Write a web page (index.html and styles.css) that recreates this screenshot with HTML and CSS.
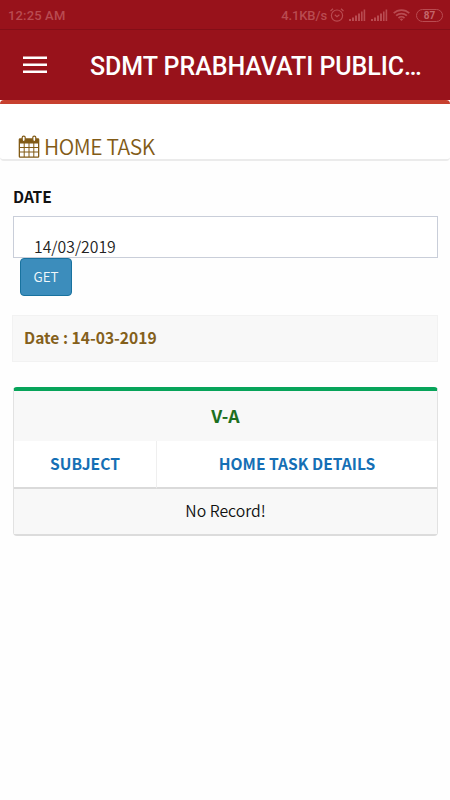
FILE: index.html
```html
<!DOCTYPE html>
<html lang="en">
<head>
    <meta charset="UTF-8">
    <meta name="viewport" content="width=device-width, initial-scale=1.0">
    <title>Home Task</title>
    <link rel="stylesheet" href="styles.css">
</head>
<body>

    <!-- Phone status bar -->
    <div class="status-bar">
        <span class="clock">12:25 AM</span>
        <span class="speed">4.1KB/s</span>
        <svg class="alarm" width="14" height="14" viewBox="0 0 14 14" fill="none" stroke="currentColor" stroke-width="1.2">
            <circle cx="7" cy="7.6" r="5.6"/>
            <path d="M4.8 6.8L7 8.8l2.4-2M.5 3L3 .8M13.5 3L11 .8"/>
        </svg>
        <svg class="signal" width="17" height="12" viewBox="0 0 17 12" fill="currentColor">
            <path d="M0 10h2v2H0zM3 8.5h2V12H3zM6 6.5h2V12H6zM9 4.5h2V12H9zM12 2.5h1.6V12H12zM14.6 0.5h1.6V12h-1.6z"/>
        </svg>
        <svg class="signal" width="17" height="12" viewBox="0 0 17 12" fill="currentColor">
            <path d="M0 10h2v2H0zM3 8.5h2V12H3zM6 6.5h2V12H6zM9 4.5h2V12H9zM12 2.5h1.6V12H12zM14.6 0.5h1.6V12h-1.6z"/>
        </svg>
        <svg class="wifi" width="17" height="12" viewBox="0 0 17 12" fill="none" stroke="currentColor" stroke-width="1.7">
            <path d="M.7 4.2a11.2 11.2 0 0 1 15.6 0M3.1 6.7a7.8 7.8 0 0 1 10.8 0M5.5 9.1a4.3 4.3 0 0 1 6 0"/>
            <path d="M8.5 12L6.8 10.2a2.5 2.5 0 0 1 3.4 0z" fill="currentColor" stroke="none"/>
        </svg>
        <span class="battery"><span class="level">87</span></span>
    </div>

    <!-- App header -->
    <div class="header">
        <svg class="menu" width="24" height="18" viewBox="0 0 24 18" fill="#fff">
            <path d="M0 .5h24V3H0zM0 7.5h24V10H0zM0 14.5h24V17H0z"/>
        </svg>
        <h1>SDMT PRABHAVATI PUBLIC…</h1>
    </div>

    <div class="page-title">
        <svg class="calendar" width="22" height="24" viewBox="0 0 22 24">
            <path fill="currentColor" fill-rule="evenodd" d="M2 3.2h18q1.3 0 1.3 1.3v17q0 1.3-1.3 1.3H2q-1.3 0-1.3-1.3v-17Q.7 3.2 2 3.2zM2 8.4v3.6h3.7V8.4zM6.7 8.4v3.6h3.8V8.4zM11.5 8.4v3.6h3.8V8.4zM16.3 8.4v3.6H20V8.4zM2 13v3.6h3.7V13zM6.7 13v3.6h3.8V13zM11.5 13v3.6h3.8V13zM16.3 13v3.6H20V13zM2 17.6v3.8h3.7v-3.8zM6.7 17.6v3.8h3.8v-3.8zM11.5 17.6v3.8h3.8v-3.8zM16.3 17.6v3.8H20v-3.8z"/>
            <!-- binder rings -->
            <g fill="#fff" stroke="currentColor" stroke-width="1.2">
                <rect x="4.2" y="1.1" width="3" height="5.4" rx="1.4"/>
                <rect x="14.8" y="1.1" width="3" height="5.4" rx="1.4"/>
            </g>
        </svg>
        <h2>HOME TASK</h2>
    </div>

    <div class="content">
        <label class="input-label" for="date">DATE</label>
        <input type="text" class="input-field" id="date" value="14/03/2019">
        <button class="get-btn">GET</button>

        <div class="date-banner">Date : 14-03-2019</div>

        <table class="task-table">
            <colgroup>
                <col class="subject-col">
                <col>
            </colgroup>
            <thead>
                <tr class="class-row"><th colspan="2">V-A</th></tr>
                <tr class="head-row">
                    <th class="subject">SUBJECT</th>
                    <th>HOME TASK DETAILS</th>
                </tr>
            </thead>
            <tbody>
                <tr class="empty-row"><td colspan="2">No Record!</td></tr>
            </tbody>
        </table>
    </div>

</body>
</html>
```
FILE: styles.css
```css
* {
    margin: 0;
    padding: 0;
    box-sizing: border-box;
}
body {
    background-color: #fefefe;
    font-family: "Noto Sans CJK SC", "Noto Sans", sans-serif;
    color: #111;
    height: 800px;
    overflow: hidden;
}
.status-bar {
    display: flex;
    align-items: center;
    height: 30px;
    padding: 1px 7px 0 8px;
    background-color: #98121b;
    border-bottom: 1px solid #830e17;
    color: #b94b51;
    font-family: Roboto, sans-serif;
    font-size: 13px;
    font-weight: 500;
}
.clock {
    margin-right: auto;
    letter-spacing: 0.15px;
}
.speed {
    letter-spacing: -0.1px;
}
.alarm {
    margin: 0 5px 0 3px;
}
.signal {
    margin-right: 5px;
}
.wifi {
    margin-right: 6px;
}
.battery {
    display: flex;
    width: 27px;
    height: 13px;
    padding: 1px 3px;
    border: 1px solid #b94b51;
    border-radius: 7px;
}
.level {
    flex: 1;
    color: #c4666b;
    font-size: 10px;
    font-weight: 700;
    line-height: 10px;
    text-align: center;
}
.header {
    display: flex;
    align-items: center;
    height: 70px;
    background-color: #98121b;
    padding: 0 23px;
}
.menu {
    margin-right: 43px;
}
h1 {
    padding-top: 2px;
    color: white;
    font-family: Roboto, sans-serif;
    font-size: 25px;
    font-weight: 500;
    letter-spacing: -0.05px;
    white-space: nowrap;
}
.page-title {
    display: flex;
    height: 61px;
    padding: 31px 18px 0;
    background-color: white;
    border-top: 4px solid #c7402f;
    border-bottom: 2px solid #ebebeb;
    border-radius: 4px;
    color: #825b16;
}
h2 {
    margin: -1px 0 0 4px;
    font-size: 21px;
    font-weight: 350;
    letter-spacing: -0.4px;
    line-height: 24px;
}
.content {
    padding: 24px 12px 0;
}
.input-label {
    display: block;
    font-size: 15.5px;
    font-weight: 700;
    line-height: 22px;
    margin: 0 1px 9px;
}
.input-field {
    display: block;
    width: 425px;
    height: 42px;
    margin-left: 1px;
    padding: 18px 20px 0;
    border: 1px solid #c9ced9;
    background-color: white;
    color: #222;
    font-family: inherit;
    font-size: 15.8px;
    font-weight: 350;
}
.get-btn {
    display: block;
    width: 52px;
    height: 38px;
    margin-left: 8px;
    padding-bottom: 2px;
    background-color: #3c8dbc;
    border: 1px solid #18729f;
    border-radius: 4px;
    color: #f2f7fa;
    font-family: inherit;
    font-size: 13.5px;
    font-weight: 350;
}
.date-banner {
    height: 47px;
    margin: 19px 0 25px;
    padding: 0 11px;
    background-color: #f8f8f8;
    border: 1px solid #f2f2f2;
    color: #84601b;
    font-size: 15.6px;
    font-weight: 700;
    line-height: 43px;
}
.task-table {
    width: 425px;
    margin-left: 1px;
    border-collapse: separate;
    border-spacing: 0;
    border-top: 4px solid #07a45a;
    border-right: 1px solid #e2e2e2;
    border-bottom: 2px solid #dcdcdc;
    border-left: 1px solid #e2e2e2;
    border-radius: 4px;
    table-layout: fixed;
    text-align: center;
}
.subject-col {
    width: 143px;
}
.class-row th {
    height: 50px;
    padding-bottom: 3px;
    background-color: #f8f8f8;
    color: #1d6f20;
    font-size: 17.7px;
    line-height: 24px;
}
.head-row th {
    height: 48px;
    padding-bottom: 3px;
    background-color: white;
    border-bottom: 2px solid #dadada;
    color: #156fb5;
    font-size: 15.6px;
    line-height: 24px;
}
.head-row .subject {
    border-right: 1px solid #efefef;
}
.empty-row td {
    height: 45px;
    padding-bottom: 1px;
    background-color: #f8f8f8;
    font-size: 15.8px;
    font-weight: 350;
    line-height: 24px;
}
```
